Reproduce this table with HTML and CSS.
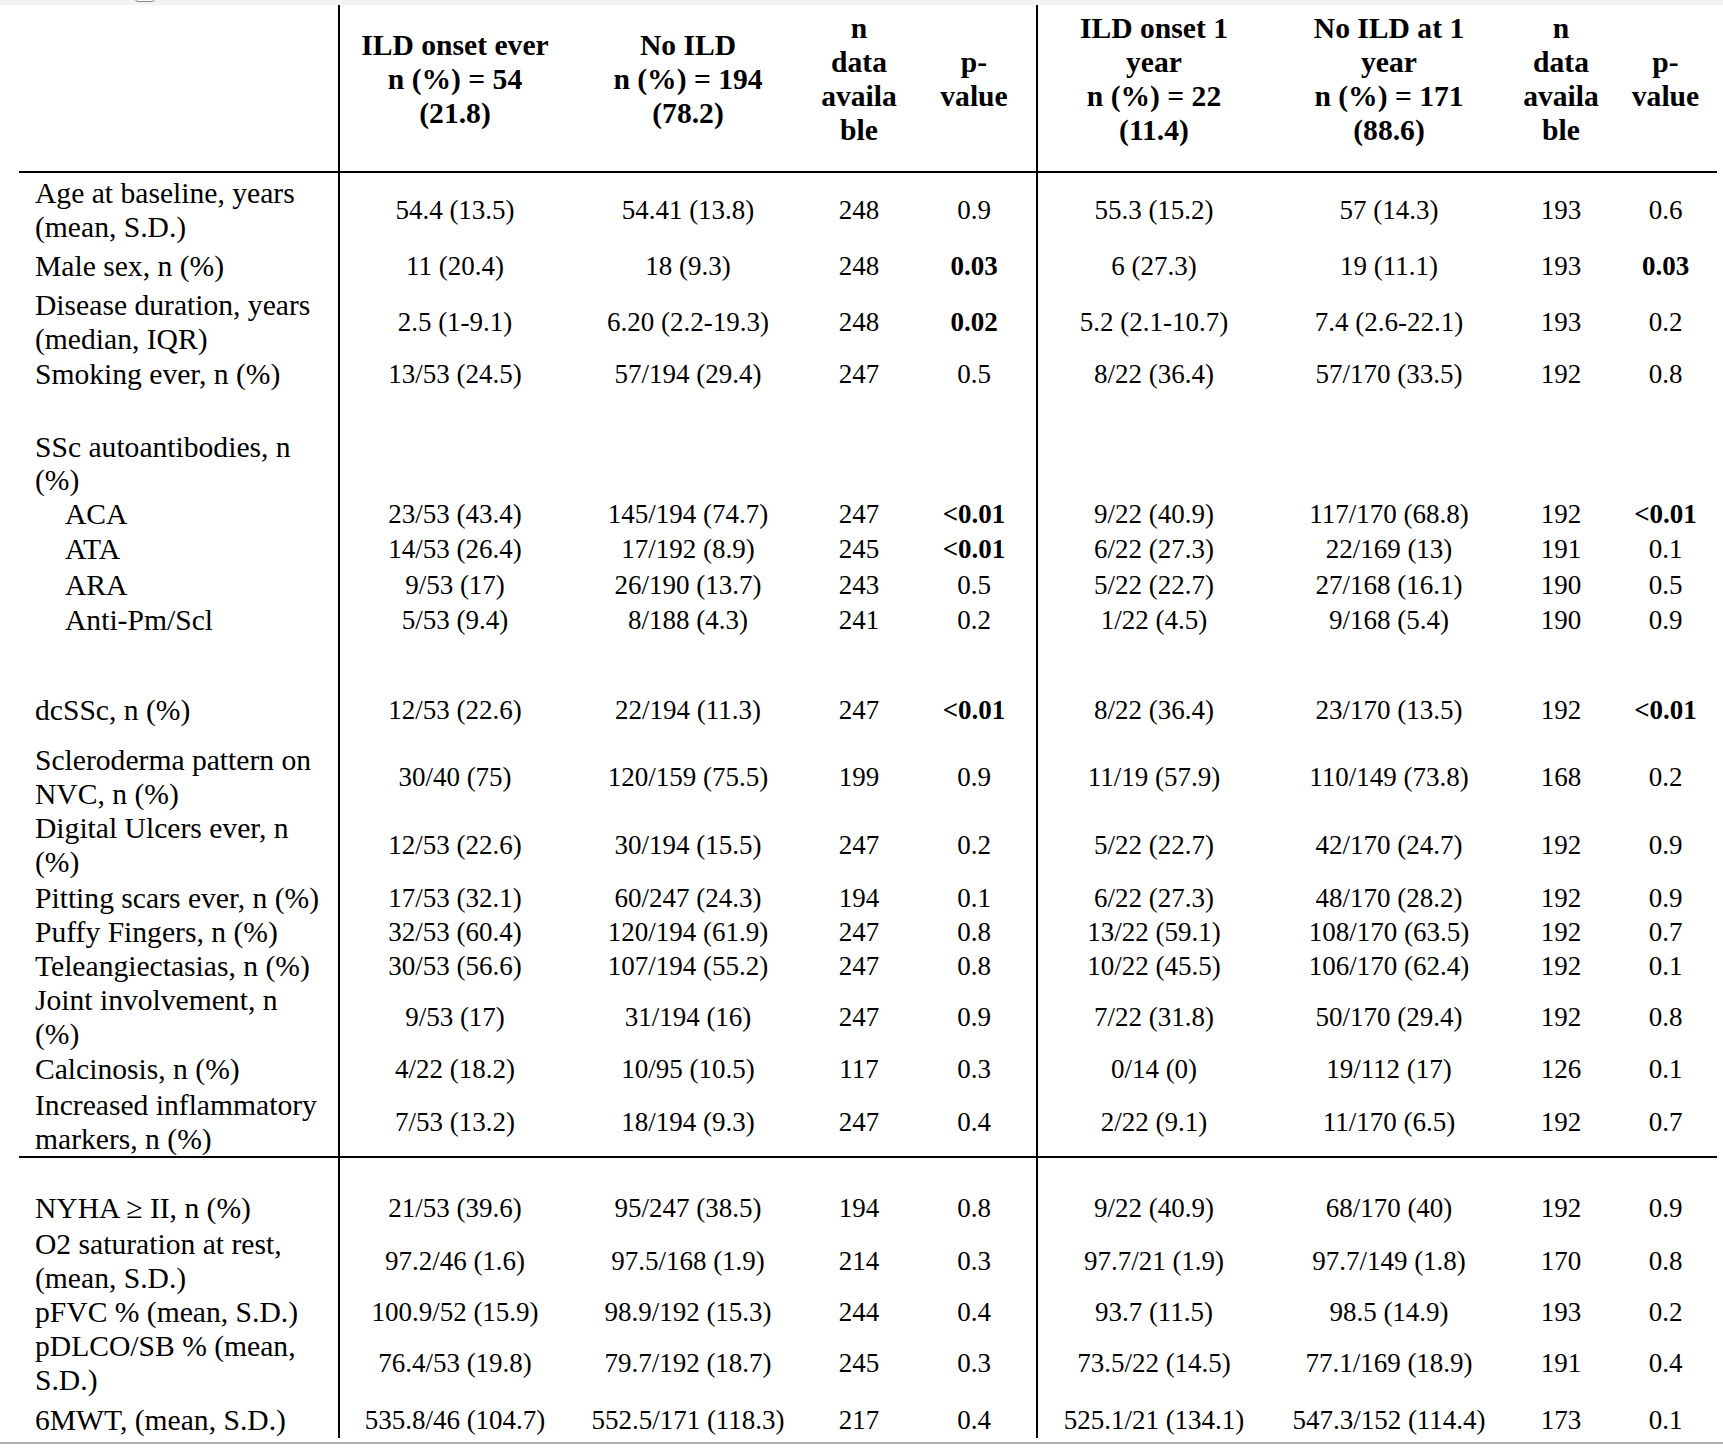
FILE: index.html
```html
<!DOCTYPE html>
<html>
<head>
<meta charset="utf-8">
<link rel="stylesheet" href="styles.css">
</head>
<body>
<div class="topbar"><div class="tab"></div></div>
<div class="table">
  <div class="row head">
    <div class="c"></div>
    <div class="c sep">ILD onset ever<br>n (%) = 54<br>(21.8)</div>
    <div class="c">No ILD<br>n (%) = 194<br>(78.2)</div>
    <div class="c">n<br>data<br>availa<br>ble</div>
    <div class="c">p-<br>value</div>
    <div class="c sep">ILD onset 1<br>year<br>n (%) = 22<br>(11.4)</div>
    <div class="c">No ILD at 1<br>year<br>n (%) = 171<br>(88.6)</div>
    <div class="c">n<br>data<br>availa<br>ble</div>
    <div class="c">p-<br>value</div>
  </div>

  <div class="row pt3">
    <div class="c lbl">Age at baseline, years<br>(mean, S.D.)</div>
    <div class="c sep">54.4 (13.5)</div><div class="c">54.41 (13.8)</div><div class="c">248</div><div class="c">0.9</div>
    <div class="c sep">55.3 (15.2)</div><div class="c">57 (14.3)</div><div class="c">193</div><div class="c">0.6</div>
  </div>
  <div class="row pt5">
    <div class="c lbl">Male sex, n (%)</div>
    <div class="c sep">11 (20.4)</div><div class="c">18 (9.3)</div><div class="c">248</div><div class="c"><b>0.03</b></div>
    <div class="c sep">6 (27.3)</div><div class="c">19 (11.1)</div><div class="c">193</div><div class="c"><b>0.03</b></div>
  </div>
  <div class="row pt5">
    <div class="c lbl">Disease duration, years<br>(median, IQR)</div>
    <div class="c sep">2.5 (1-9.1)</div><div class="c">6.20 (2.2-19.3)</div><div class="c">248</div><div class="c"><b>0.02</b></div>
    <div class="c sep">5.2 (2.1-10.7)</div><div class="c">7.4 (2.6-22.1)</div><div class="c">193</div><div class="c">0.2</div>
  </div>
  <div class="row pt1">
    <div class="c lbl">Smoking ever, n (%)</div>
    <div class="c sep">13/53 (24.5)</div><div class="c">57/194 (29.4)</div><div class="c">247</div><div class="c">0.5</div>
    <div class="c sep">8/22 (36.4)</div><div class="c">57/170 (33.5)</div><div class="c">192</div><div class="c">0.8</div>
  </div>

  <div class="row pt40 tight">
    <div class="c lbl">SSc autoantibodies, n<br>(%)</div>
    <div class="c sep"></div><div class="c"></div><div class="c"></div><div class="c"></div>
    <div class="c sep"></div><div class="c"></div><div class="c"></div><div class="c"></div>
  </div>
  <div class="row">
    <div class="c lbl sub">ACA</div>
    <div class="c sep">23/53 (43.4)</div><div class="c">145/194 (74.7)</div><div class="c">247</div><div class="c"><b>&lt;0.01</b></div>
    <div class="c sep">9/22 (40.9)</div><div class="c">117/170 (68.8)</div><div class="c">192</div><div class="c"><b>&lt;0.01</b></div>
  </div>
  <div class="row pt1">
    <div class="c lbl sub">ATA</div>
    <div class="c sep">14/53 (26.4)</div><div class="c">17/192 (8.9)</div><div class="c">245</div><div class="c"><b>&lt;0.01</b></div>
    <div class="c sep">6/22 (27.3)</div><div class="c">22/169 (13)</div><div class="c">191</div><div class="c">0.1</div>
  </div>
  <div class="row pt2">
    <div class="c lbl sub">ARA</div>
    <div class="c sep">9/53 (17)</div><div class="c">26/190 (13.7)</div><div class="c">243</div><div class="c">0.5</div>
    <div class="c sep">5/22 (22.7)</div><div class="c">27/168 (16.1)</div><div class="c">190</div><div class="c">0.5</div>
  </div>
  <div class="row pt1">
    <div class="c lbl sub">Anti-Pm/Scl</div>
    <div class="c sep">5/53 (9.4)</div><div class="c">8/188 (4.3)</div><div class="c">241</div><div class="c">0.2</div>
    <div class="c sep">1/22 (4.5)</div><div class="c">9/168 (5.4)</div><div class="c">190</div><div class="c">0.9</div>
  </div>

  <div class="row pt56">
    <div class="c lbl">dcSSc, n (%)</div>
    <div class="c sep">12/53 (22.6)</div><div class="c">22/194 (11.3)</div><div class="c">247</div><div class="c"><b>&lt;0.01</b></div>
    <div class="c sep">8/22 (36.4)</div><div class="c">23/170 (13.5)</div><div class="c">192</div><div class="c"><b>&lt;0.01</b></div>
  </div>
  <div class="row pt16">
    <div class="c lbl">Scleroderma pattern on<br>NVC, n (%)</div>
    <div class="c sep">30/40 (75)</div><div class="c">120/159 (75.5)</div><div class="c">199</div><div class="c">0.9</div>
    <div class="c sep">11/19 (57.9)</div><div class="c">110/149 (73.8)</div><div class="c">168</div><div class="c">0.2</div>
  </div>
  <div class="row">
    <div class="c lbl">Digital Ulcers ever, n<br>(%)</div>
    <div class="c sep">12/53 (22.6)</div><div class="c">30/194 (15.5)</div><div class="c">247</div><div class="c">0.2</div>
    <div class="c sep">5/22 (22.7)</div><div class="c">42/170 (24.7)</div><div class="c">192</div><div class="c">0.9</div>
  </div>
  <div class="row pt2">
    <div class="c lbl">Pitting scars ever, n (%)</div>
    <div class="c sep">17/53 (32.1)</div><div class="c">60/247 (24.3)</div><div class="c">194</div><div class="c">0.1</div>
    <div class="c sep">6/22 (27.3)</div><div class="c">48/170 (28.2)</div><div class="c">192</div><div class="c">0.9</div>
  </div>
  <div class="row">
    <div class="c lbl">Puffy Fingers, n (%)</div>
    <div class="c sep">32/53 (60.4)</div><div class="c">120/194 (61.9)</div><div class="c">247</div><div class="c">0.8</div>
    <div class="c sep">13/22 (59.1)</div><div class="c">108/170 (63.5)</div><div class="c">192</div><div class="c">0.7</div>
  </div>
  <div class="row">
    <div class="c lbl">Teleangiectasias, n (%)</div>
    <div class="c sep">30/53 (56.6)</div><div class="c">107/194 (55.2)</div><div class="c">247</div><div class="c">0.8</div>
    <div class="c sep">10/22 (45.5)</div><div class="c">106/170 (62.4)</div><div class="c">192</div><div class="c">0.1</div>
  </div>
  <div class="row">
    <div class="c lbl">Joint involvement, n<br>(%)</div>
    <div class="c sep">9/53 (17)</div><div class="c">31/194 (16)</div><div class="c">247</div><div class="c">0.9</div>
    <div class="c sep">7/22 (31.8)</div><div class="c">50/170 (29.4)</div><div class="c">192</div><div class="c">0.8</div>
  </div>
  <div class="row pt1">
    <div class="c lbl">Calcinosis, n (%)</div>
    <div class="c sep">4/22 (18.2)</div><div class="c">10/95 (10.5)</div><div class="c">117</div><div class="c">0.3</div>
    <div class="c sep">0/14 (0)</div><div class="c">19/112 (17)</div><div class="c">126</div><div class="c">0.1</div>
  </div>
  <div class="row pt2 rule">
    <div class="c lbl">Increased inflammatory<br>markers, n (%)</div>
    <div class="c sep">7/53 (13.2)</div><div class="c">18/194 (9.3)</div><div class="c">247</div><div class="c">0.4</div>
    <div class="c sep">2/22 (9.1)</div><div class="c">11/170 (6.5)</div><div class="c">192</div><div class="c">0.7</div>
  </div>

  <div class="row pt33">
    <div class="c lbl">NYHA &ge; II, n (%)</div>
    <div class="c sep">21/53 (39.6)</div><div class="c">95/247 (38.5)</div><div class="c">194</div><div class="c">0.8</div>
    <div class="c sep">9/22 (40.9)</div><div class="c">68/170 (40)</div><div class="c">192</div><div class="c">0.9</div>
  </div>
  <div class="row pt2">
    <div class="c lbl">O2 saturation at rest,<br>(mean, S.D.)</div>
    <div class="c sep">97.2/46 (1.6)</div><div class="c">97.5/168 (1.9)</div><div class="c">214</div><div class="c">0.3</div>
    <div class="c sep">97.7/21 (1.9)</div><div class="c">97.7/149 (1.8)</div><div class="c">170</div><div class="c">0.8</div>
  </div>
  <div class="row">
    <div class="c lbl">pFVC % (mean, S.D.)</div>
    <div class="c sep">100.9/52 (15.9)</div><div class="c">98.9/192 (15.3)</div><div class="c">244</div><div class="c">0.4</div>
    <div class="c sep">93.7 (11.5)</div><div class="c">98.5 (14.9)</div><div class="c">193</div><div class="c">0.2</div>
  </div>
  <div class="row">
    <div class="c lbl">pDLCO/SB % (mean,<br>S.D.)</div>
    <div class="c sep">76.4/53 (19.8)</div><div class="c">79.7/192 (18.7)</div><div class="c">245</div><div class="c">0.3</div>
    <div class="c sep">73.5/22 (14.5)</div><div class="c">77.1/169 (18.9)</div><div class="c">191</div><div class="c">0.4</div>
  </div>
  <div class="row pt6 last">
    <div class="c lbl">6MWT, (mean, S.D.)</div>
    <div class="c sep">535.8/46 (104.7)</div><div class="c">552.5/171 (118.3)</div><div class="c">217</div><div class="c">0.4</div>
    <div class="c sep">525.1/21 (134.1)</div><div class="c">547.3/152 (114.4)</div><div class="c">173</div><div class="c">0.1</div>
  </div>
</div>
<div class="bottombar"></div>
</body>
</html>
```

FILE: styles.css
```css
* { box-sizing: border-box; }
html, body { margin: 0; padding: 0; background: #ffffff; }
body {
  font-family: "Liberation Serif", "Times New Roman", serif;
  color: #000;
  width: 1723px;
  height: 1448px;
  overflow: hidden;
}
.topbar {
  height: 5px;
  background: #f2f2f2;
  display: flex;
}
.tab {
  margin-left: 135px;
  margin-top: -8px;
  width: 20px;
  height: 10px;
  border: 1px solid #8a8a8a;
  border-radius: 3px;
  background: #fafafa;
}
.table {
  margin-left: 19px;
  width: 1698px;
}
.row {
  display: grid;
  grid-template-columns: 319px 232px 236px 106px 124px 234px 238px 106px 103px;
  --pt: 0px;
}
.row.pt1 { --pt: 1px; }
.row.pt2 { --pt: 2px; }
.row.pt3 { --pt: 3px; }
.row.pt5 { --pt: 5px; }
.row.pt6 { --pt: 6px; }
.row.pt16 { --pt: 16px; }
.row.pt33 { --pt: 33px; }
.row.pt40 { --pt: 40px; }
.row.pt56 { --pt: 56px; }
.c {
  display: flex;
  align-items: center;
  justify-content: center;
  text-align: center;
  padding-top: var(--pt);
  font-size: 27px;
  line-height: 34px;
  white-space: nowrap;
}
.row.tight .c { line-height: 33px; }
.c.sep { border-left: 2px solid #000; }
.c.lbl {
  justify-content: flex-start;
  text-align: left;
  padding-left: 16px;
  font-size: 29.6px;
}
.c.lbl.sub { padding-left: 46px; }
.c b { font-weight: bold; }
.row.head {
  height: 168px;
  border-bottom: 2px solid #000;
}
.row.head .c {
  font-weight: bold;
  font-size: 29.6px;
  padding-bottom: 18px;
}
.row.rule { border-bottom: 2px solid #000; }
.row.last .c { padding-bottom: 1px; }
.bottombar {
  margin-top: 4px;
  height: 2px;
  background: #b0b0b0;
}
```
